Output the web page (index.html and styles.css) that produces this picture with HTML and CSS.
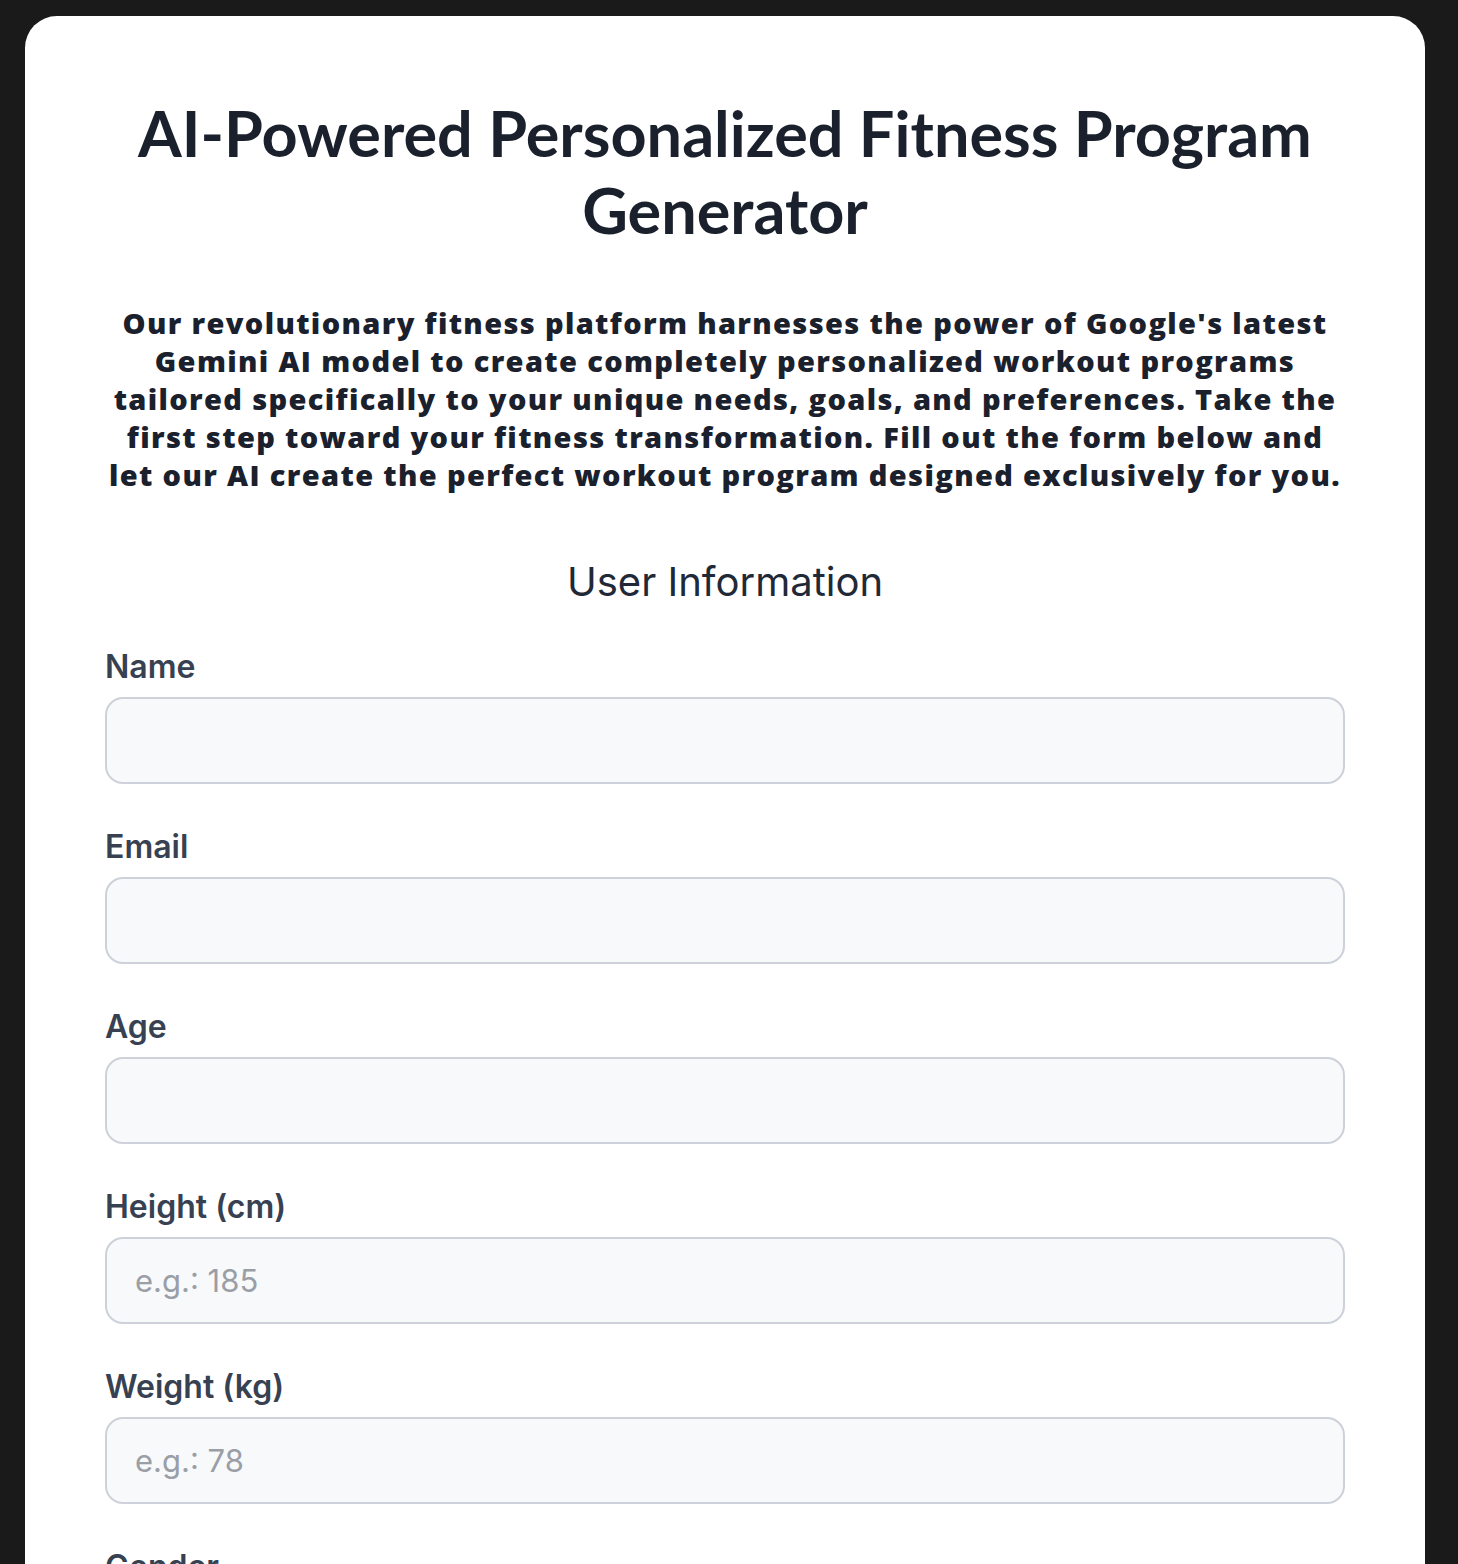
FILE: index.html
```html
<!DOCTYPE html>
<html lang="en">
<head>
<meta charset="utf-8">
<title>AI-Powered Personalized Fitness Program Generator</title>
<link rel="stylesheet" href="styles.css">
</head>
<body>
<main class="card">
  <h1 class="title">AI-Powered Personalized Fitness Program<br>Generator</h1>
  <p class="intro">Our revolutionary fitness platform harnesses the power of Google's latest<br>Gemini AI model to create completely personalized workout programs<br>tailored specifically to your unique needs, goals, and preferences. Take the<br>first step toward your fitness transformation. Fill out the form below and<br>let our AI create the perfect workout program designed exclusively for you.</p>
  <h2 class="section-title">User Information</h2>
  <form class="form">
    <div class="field">
      <label class="label" for="name">Name</label>
      <input class="input" id="name" type="text">
    </div>
    <div class="field">
      <label class="label" for="email">Email</label>
      <input class="input" id="email" type="email">
    </div>
    <div class="field">
      <label class="label" for="age">Age</label>
      <input class="input" id="age" type="number">
    </div>
    <div class="field">
      <label class="label" for="height">Height (cm)</label>
      <input class="input" id="height" type="text" placeholder="e.g.: 185">
    </div>
    <div class="field">
      <label class="label" for="weight">Weight (kg)</label>
      <input class="input" id="weight" type="text" placeholder="e.g.: 78">
    </div>
    <div class="field">
      <label class="label" for="gender">Gender</label>
      <select class="input" id="gender">
        <option>Select</option>
      </select>
    </div>
  </form>
</main>
</body>
</html>
```
FILE: styles.css
```css
html, body {
  margin: 0;
  padding: 0;
  background: #1a1a1a;
}

body {
  padding: 16px 0 0 25px;
  font-family: Inter, "Liberation Sans", sans-serif;
}

.card {
  width: 1400px;
  box-sizing: border-box;
  background: #ffffff;
  border-radius: 32px;
  padding: 78px 80px 80px;
}

.title {
  margin: 0;
  font-family: Lato, "Open Sans", sans-serif;
  font-weight: 700;
  font-size: 63px;
  line-height: 77px;
  color: #1a202c;
  text-align: center;
  white-space: nowrap;
}

.intro {
  margin: 56px 0 0;
  font-family: "Open Sans", Lato, sans-serif;
  font-weight: 800;
  font-size: 29px;
  line-height: 38px;
  letter-spacing: 1.35px;
  color: #1a202c;
  text-align: center;
  white-space: nowrap;
}

.section-title {
  margin: 58px 0 0;
  font-family: Inter, sans-serif;
  font-weight: 400;
  font-size: 40px;
  line-height: 60px;
  color: #1f2937;
  text-align: center;
}

.form {
  margin-top: 32px;
  display: flex;
  flex-direction: column;
  gap: 40px;
}

.field {
  display: flex;
  flex-direction: column;
  gap: 8px;
}

.label {
  font-family: Inter, sans-serif;
  font-weight: 600;
  font-size: 32px;
  line-height: 45px;
  color: #374151;
}

.input {
  box-sizing: border-box;
  width: 100%;
  height: 87px;
  padding: 0 28px;
  border: 2px solid #cdd1d9;
  border-radius: 18px;
  background: #f8f9fb;
  font-family: Inter, sans-serif;
  font-size: 31px;
  color: #1f2937;
  outline: none;
  appearance: none;
}

.input::placeholder {
  color: #9a9ea6;
}
```
